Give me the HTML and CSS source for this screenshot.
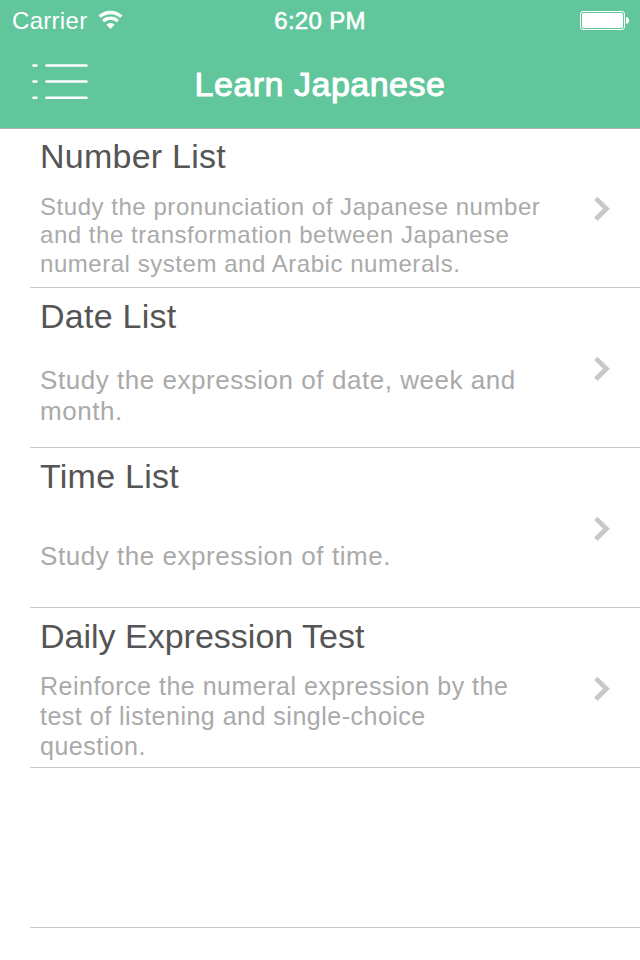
FILE: index.html
```html
<!DOCTYPE html>
<html lang="en">
<head>
  <meta charset="UTF-8">
  <meta name="viewport" content="width=device-width, initial-scale=1.0">
  <title>Learn Japanese</title>
  <link rel="stylesheet" href="styles.css">
</head>

<body>

  <!-- Header -->
  <header class="header">
    <div class="status-bar">
      <div class="carrier">
        <span>Carrier</span>
        <svg class="wifi" width="26" height="20" viewBox="0 0 26 20">
          <path d="M1.6 6.8 A16 16 0 0 1 23.4 6.8" fill="none" stroke="#fff" stroke-width="3.4"/>
          <path d="M5.2 11.2 A10.4 10.4 0 0 1 19.8 11.2" fill="none" stroke="#fff" stroke-width="3.2"/>
          <path d="M8.3 14.6 A6.3 6.3 0 0 1 16.7 14.6 L12.5 18.9 Z" fill="#fff"/>
        </svg>
      </div>
      <div class="clock">6:20 PM</div>
      <svg class="battery" width="50" height="20" viewBox="0 0 50 20">
        <rect x="0.5" y="0.5" width="44" height="18" rx="2.5" fill="none" stroke="#fff"/>
        <rect x="2" y="2" width="41" height="15" rx="1.5" fill="#fff"/>
        <path d="M46 6 Q49 6.5 49 9.5 Q49 12.5 46 13 Z" fill="#fff"/>
      </svg>
    </div>
    <div class="nav-bar">
      <svg class="menu-icon" width="56" height="36" viewBox="0 0 56 36">
        <g stroke="#fff" stroke-width="2.6" stroke-linecap="round">
          <path d="M1.5 1.5h3M14.5 1.5h40"/>
          <path d="M1.5 17.5h3M14.5 17.5h40"/>
          <path d="M1.5 33.7h3M14.5 33.7h40"/>
        </g>
      </svg>
      <h1 class="nav-title">Learn Japanese</h1>
    </div>
  </header>

  <!-- Lesson list -->
  <main class="list">
    <div class="row">
      <div class="row-text">
        <h2>Number List</h2>
        <p class="desc desc-small">Study the pronunciation of Japanese number<br>and the transformation between Japanese<br>numeral system and Arabic numerals.</p>
      </div>
      <svg class="chevron" width="18" height="26" viewBox="0 0 18 26"><path d="M2.8 2.4 L13.4 12.8 L2.8 23.2"/></svg>
    </div>
    <div class="row">
      <div class="row-text">
        <h2>Date List</h2>
        <p class="desc">Study the expression of date, week and<br>month.</p>
      </div>
      <svg class="chevron" width="18" height="26" viewBox="0 0 18 26"><path d="M2.8 2.4 L13.4 12.8 L2.8 23.2"/></svg>
    </div>
    <div class="row">
      <div class="row-text">
        <h2>Time List</h2>
        <p class="desc desc-single">Study the expression of time.</p>
      </div>
      <svg class="chevron" width="18" height="26" viewBox="0 0 18 26"><path d="M2.8 2.4 L13.4 12.8 L2.8 23.2"/></svg>
    </div>
    <div class="row">
      <div class="row-text">
        <h2 class="long-title">Daily Expression Test</h2>
        <p class="desc desc-medium">Reinforce the numeral expression by the<br>test of listening and single-choice<br>question.</p>
      </div>
      <svg class="chevron" width="18" height="26" viewBox="0 0 18 26"><path d="M2.8 2.4 L13.4 12.8 L2.8 23.2"/></svg>
    </div>
    <div class="row"></div>
  </main>

</body>

</html>
```

FILE: styles.css
```css
/* Global Styles */
* {
  box-sizing: border-box;
}

body {
  font-family: "Liberation Sans", Arial, sans-serif;
  margin: 0;
  background-color: #fff;
  height: 960px;
  overflow: hidden;
}

h1,
h2,
p {
  margin: 0;
  font-weight: normal;
}

svg {
  display: block;
}

/* Header */
.header {
  height: 128px;
  background-color: #61c69b;
  box-shadow: 0 1px 0 #b2b2b2;
  color: #fff;
}

.status-bar {
  display: grid;
  grid-template-columns: 1fr auto 1fr;
  height: 40px;
  padding: 0 12px;
  font-size: 24px;
  line-height: 41px;
}

.carrier {
  display: flex;
  gap: 11px;
  letter-spacing: 0.3px;
}

.wifi {
  margin-top: 10px;
}

.clock {
  letter-spacing: 0.3px;
  -webkit-text-stroke: 0.6px #fff;
}

.battery {
  justify-self: end;
  margin: 11px -2px 0 0;
}

.nav-bar {
  display: grid;
  grid-template-columns: 56px 1fr 56px;
  padding: 0 32px;
  height: 88px;
}

.menu-icon {
  margin-top: 24px;
}

.nav-title {
  font-size: 34px;
  line-height: 88px;
  text-align: center;
  letter-spacing: 0.5px;
  -webkit-text-stroke: 1px #fff;
}

/* List */
.row {
  display: flex;
  justify-content: space-between;
  height: 160px;
  margin-left: 30px;
  padding: 8px 29px 0 10px;
  border-bottom: 1px solid #c8c7cc;
}

.row-text {
  display: flex;
  flex-direction: column;
  white-space: nowrap;
}

.row h2 {
  font-size: 34px;
  line-height: 40px;
  letter-spacing: 0.25px;
  color: #555;
}

.row .long-title {
  letter-spacing: 0;
}

.desc {
  margin-top: 8px;
  flex: 1;
  align-content: center;
  font-size: 26px;
  line-height: 31px;
  letter-spacing: 0.54px;
  color: #aaa;
}

.desc-small {
  font-size: 24px;
  line-height: 28.5px;
}

.desc-single {
  margin-top: 10px;
}

.desc-medium {
  font-size: 25px;
  line-height: 30px;
  letter-spacing: 0.5px;
}

.chevron {
  margin-top: 59.5px;
  fill: none;
  stroke: #c7c7cc;
  stroke-width: 4.8;
}
```
